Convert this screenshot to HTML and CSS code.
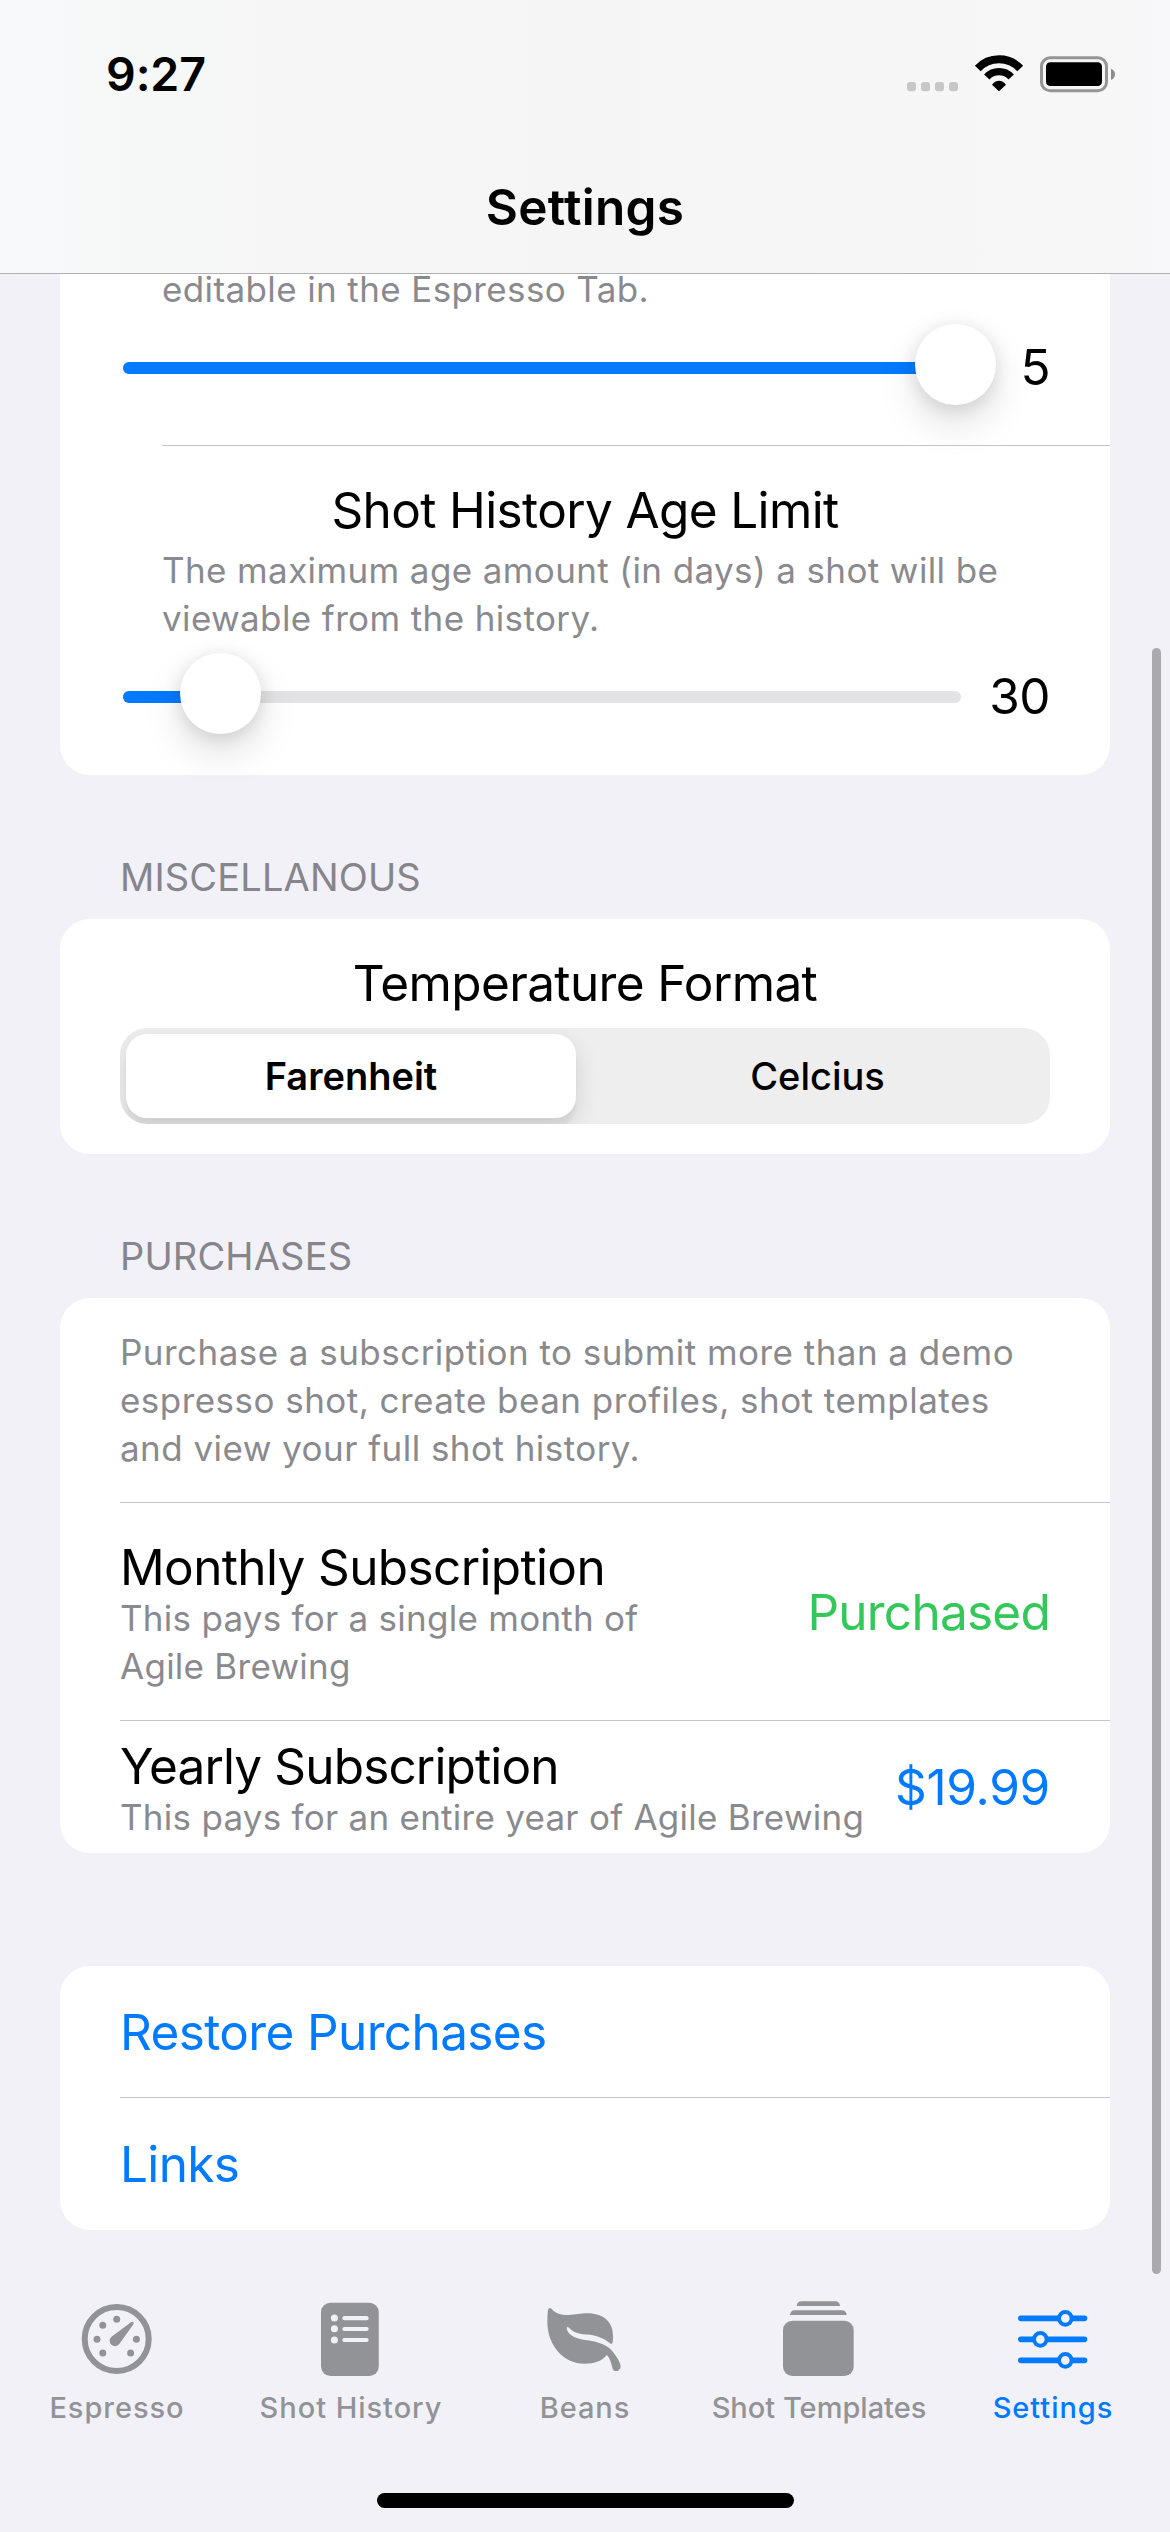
FILE: index.html
```
<!DOCTYPE html>
<html lang="en">
<head>
<meta charset="utf-8">
<title>Settings</title>
<link rel="stylesheet" href="styles.css">
</head>
<body>
<header class="header">
  <div class="status">
    <span class="status-time">9:27</span>
    <svg class="status-icons" viewBox="81 74 625 114" aria-hidden="true">
      <g fill="#c7c7c8">
        <rect x="81" y="155" width="27" height="28" rx="9"/>
        <rect x="123" y="155" width="27" height="28" rx="9"/>
        <rect x="165" y="155" width="27" height="28" rx="9"/>
        <rect x="207" y="155" width="27" height="28" rx="9"/>
      </g>
      <path d="M293.4 114.7A87 87 0 0 1 420.6 114.7" fill="none" stroke="#000" stroke-width="24"/>
      <path d="M320.4 139.9A50 50 0 0 1 393.6 139.9" fill="none" stroke="#000" stroke-width="22"/>
      <path d="M357 183L336 163Q345 151 357 151T378 163Z"/>
      <rect x="484.500" y="82.500" width="195" height="99" rx="26" fill="none" stroke="#959595" stroke-width="9"/>
      <rect x="498" y="96" width="168" height="71" rx="13"/>
      <path d="M693 115Q705 120 705 132T693 149Z" fill="#8c8c8c"/>
    </svg>
  </div>
  <h1 class="title">Settings</h1>
</header>

<main class="content">
  <section class="card card-limits">
    <div class="limit limit-first">
      <p class="caption indent caption-first">editable in the Espresso Tab.</p>
      <div class="slider-row">
        <div class="slider"><div class="slider-fill" style="width:100%"></div><span class="knob" style="left:832.500px"></span></div>
        <span class="value">5</span>
      </div>
    </div>
    <div class="limit limit-second">
      <h2 class="label center">Shot History Age Limit</h2>
      <p class="caption indent gap">The maximum age amount (in days) a shot will be<br>viewable from the history.</p>
      <div class="slider-row">
        <div class="slider"><div class="slider-fill" style="width:10%"></div><span class="knob" style="left:97.500px"></span></div>
        <span class="value">30</span>
      </div>
    </div>
  </section>

  <h3 class="section-title">MISCELLANOUS</h3>
  <section class="card card-misc">
    <h2 class="label center">Temperature Format</h2>
    <div class="segmented">
      <span class="segment selected">Farenheit</span>
      <span class="segment">Celcius</span>
    </div>
  </section>

  <h3 class="section-title">PURCHASES</h3>
  <section class="card">
    <div class="row intro">
      <p class="caption wide">Purchase a subscription to submit more than a demo<br>espresso shot, create bean profiles, shot templates<br>and view your full shot history.</p>
    </div>
    <div class="row plan monthly">
      <div>
        <h2 class="label">Monthly Subscription</h2>
        <p class="caption tight">This pays for a single month of<br>Agile Brewing</p>
      </div>
      <span class="label green amount">Purchased</span>
    </div>
    <div class="row plan yearly">
      <div>
        <h2 class="label yearly-name">Yearly Subscription</h2>
        <p class="caption tight">This pays for an entire year of Agile Brewing</p>
      </div>
      <span class="label blue amount price">$19.99</span>
    </div>
  </section>

  <section class="card card-links">
    <a class="row link label blue">Restore Purchases</a>
    <a class="row link label blue">Links</a>
  </section>
  <span class="scrollbar"></span>
</main>

<nav class="tabs">
  <a class="tab">
    <svg viewBox="0 0 96 96" aria-hidden="true">
      <circle cx="47.700" cy="48" r="32" fill="none" stroke="currentColor" stroke-width="6"/>
      <g fill="currentColor">
        <circle cx="47.700" cy="28.300" r="3.500"/><circle cx="33.800" cy="34.200" r="3.500"/>
        <circle cx="28" cy="48.200" r="3.500"/><circle cx="33.800" cy="62" r="3.500"/>
        <circle cx="61.600" cy="62" r="3.500"/><circle cx="67.400" cy="48.200" r="3.500"/>
        <path d="M42.500 45.700L62 31.200Q65.200 30 64.600 33L50.500 52.800A5.400 5.400 0 1 1 42.500 45.700Z"/>
      </g>
    </svg>
    <span>Espresso</span>
  </a>
  <a class="tab">
    <svg viewBox="0 0 96 96" aria-hidden="true">
      <rect x="18" y="11.700" width="57.800" height="73.300" rx="9.500" fill="currentColor"/>
      <g fill="#f2f1f7"><circle cx="31.400" cy="27" r="3.500"/><circle cx="31.400" cy="37.800" r="3.500"/><circle cx="31.400" cy="49" r="3.500"/></g>
      <path d="M41.400 27.200H63.600M41.400 38H63.600M41.400 49H63.600" stroke="#f2f1f7" stroke-width="4.200" stroke-linecap="round"/>
    </svg>
    <span>Shot History</span>
  </a>
  <a class="tab">
    <svg viewBox="21 3 288 288" aria-hidden="true">
      <path fill="currentColor" d="M65 57C76 70 90 75 115 75C138 74 150 70 172 70C222 70 249 98 249 136C249 150 249 156 247 160Q244 164 238 158C222 145 205 138 180 134C150 132 131 129 117 113Q112 109 110 114C112 133 132 144 160 149C195 154 225 158 246 182C262 202 272 218 272 230C270 246 250 247 248 236C243 218 240 205 231 195C215 213 195 221 163 221C100 221 52 165 52 95C52 80 53 68 54 60Q57 50 65 57Z"/>
    </svg>
    <span>Beans</span>
  </a>
  <a class="tab">
    <svg viewBox="3 3 288 288" aria-hidden="true">
      <g fill="currentColor">
        <path d="M80 48Q81 34 95 34H195Q209 34 210 48Z"/>
        <path d="M60 75Q61 61 75 61H215Q229 61 230 75Z"/>
        <rect x="39" y="92" width="212" height="166" rx="28"/>
      </g>
    </svg>
    <span class="snug">Shot Templates</span>
  </a>
  <a class="tab active">
    <svg viewBox="705 3 288 288" aria-hidden="true">
      <path d="M752.500 85H943.500M752.500 148H943.500M752.500 211H943.500" stroke="currentColor" stroke-width="17" stroke-linecap="round"/>
      <g fill="#f2f1f7" stroke="currentColor" stroke-width="12"><circle cx="886" cy="85" r="19"/><circle cx="811" cy="148" r="19"/><circle cx="886" cy="211" r="19"/></g>
    </svg>
    <span>Settings</span>
  </a>
</nav>
<div class="home-indicator"></div>
</body>
</html>
```
FILE: styles.css
```
* { box-sizing: border-box; margin: 0; padding: 0; }

body {
  width: 1170px;
  height: 2532px;
  display: flex;
  flex-direction: column;
  overflow: hidden;
  background: #f2f1f7;
  color: #000;
  font-family: Inter, "Liberation Sans", sans-serif;
  font-weight: 400;
}

/* Header */
.header {
  flex: none;
  height: 274px;
  border-bottom: 1px solid #b2b2b5;
  background: linear-gradient(90deg, #f8f9fb 0, #f7f8f8 90px, #f6f6f6 300px, #f5f5f5 585px, #f6f6f6 870px, #f7f7f7 1110px, #f8f8fb 1170px);
}
.status {
  display: flex;
  justify-content: space-between;
  align-items: center;
  height: 141px;
  padding: 7px 54.700px 0 106px;
}
.status-time { font-size: 46.500px; font-weight: 600; line-height: 60px; letter-spacing: -.1px; }
.status-icons { width: 208.330px; height: 38px; }
.title { text-align: center; font-size: 49.500px; font-weight: 600; line-height: 132px; letter-spacing: .3px; }

/* Scrolling content */
.content { flex: none; height: 2017px; padding: 0 60px; position: relative; }
.card { background: #fff; border-radius: 30px; }
.card-limits { border-radius: 0 0 30px 30px; }

.label { font-size: 49.500px; font-weight: 400; line-height: 60px; letter-spacing: -.63px; }
.center { text-align: center; }
.caption { color: #8a8a8e; font-size: 35px; line-height: 48px; letter-spacing: .38px; }
.caption.wide { letter-spacing: .46px; }
.caption.tight { letter-spacing: .26px; }
.caption-first { height: 39px; line-height: 30px; }
.blue { color: #007aff; }
.green { color: #34c759; }

.indent { padding-left: 102px; }
.gap { margin-top: 6px; }
.limit-first { padding-bottom: 24px; }
.limit-second {
  padding: 35px 0 25px;
  background: linear-gradient(#c6c6c8, #c6c6c8) 102px 0 / 948px 1px no-repeat;
}

/* Sliders */
.slider-row {
  display: flex;
  justify-content: space-between;
  align-items: center;
  height: 108px;
  padding: 0 60px 0 63px;
}
.slider {
  position: relative;
  width: 838px;
  height: 12px;
  margin-top: 2px;
  border-radius: 6px;
  background: #e3e3e5;
}
.slider-fill { height: 12px; border-radius: 6px; background: #007aff; }
.knob {
  position: absolute;
  top: -38px;
  width: 81px;
  height: 81px;
  margin-left: -40.500px;
  border-radius: 50%;
  background: #fff;
  box-shadow: 0 18px 39px rgba(0, 0, 0, .13), 0 3px 18px rgba(0, 0, 0, .11);
}
.value { font-size: 49.500px; line-height: 60px; letter-spacing: -.57px; }

.section-title {
  padding: 78px 60px 18px;
  color: #85858b;
  font-size: 38px;
  font-weight: 400;
  line-height: 48px;
  letter-spacing: .15px;
}

/* Temperature format */
.card-misc { padding: 34px 60px 30px; }
.segmented {
  display: flex;
  gap: 15px;
  height: 96px;
  margin-top: 15px;
  padding: 6px;
  border-radius: 27px;
  background: #eee;
  overflow: hidden;
}
.segment {
  flex: 1;
  text-align: center;
  font-size: 38px;
  font-weight: 500;
  line-height: 84px;
  border-radius: 21px;
}
.segment.selected {
  flex: none;
  width: 450px;
  font-weight: 600;
  background: #fff;
  box-shadow: 0 9px 24px rgba(0, 0, 0, .12), 0 9px 3px rgba(0, 0, 0, .04);
}

/* List rows, with an inset separator above every row but the first */
.row { padding-left: 60px; padding-right: 60px; }
.row + .row {
  border-top: 1px solid transparent;
  background: linear-gradient(#c6c6c8, #c6c6c8) 60px 0 / 990px 1px no-repeat border-box;
}
.intro { padding-top: 30px; padding-bottom: 30px; }
.plan { display: flex; justify-content: space-between; align-items: center; }
.plan h2 { margin-bottom: -3px; }
.monthly { padding-top: 34px; padding-bottom: 30px; }
.yearly { padding-top: 15px; padding-bottom: 12px; }
.yearly-name { letter-spacing: -.85px; }
.amount { margin-bottom: 3px; letter-spacing: -.75px; }
.price { letter-spacing: -.27px; }

.card-links { margin-top: 113px; }
.link { display: block; height: 131px; padding-top: 2px; line-height: 129px; }
.link + .link { height: 133px; padding-top: 2px; }

.scrollbar {
  position: absolute;
  top: 374px;
  right: 9px;
  width: 9px;
  height: 1626px;
  border-radius: 4.500px;
  background: #a9a9ae;
}

/* Tab bar */
.tabs { flex: none; display: flex; height: 202px; }
.tab {
  flex: 1;
  display: flex;
  flex-direction: column;
  align-items: center;
  gap: 3px;
  color: #929397;
  font-size: 29px;
  font-weight: 500;
  line-height: 36px;
  letter-spacing: .96px;
  white-space: nowrap;
}
.tab svg { width: 96px; height: 96px; }
.tab.active { color: #007aff; }
.snug { letter-spacing: 0; }

.home-indicator { flex: none; align-self: center; width: 417px; height: 15px; border-radius: 8px; background: #000; }
```
